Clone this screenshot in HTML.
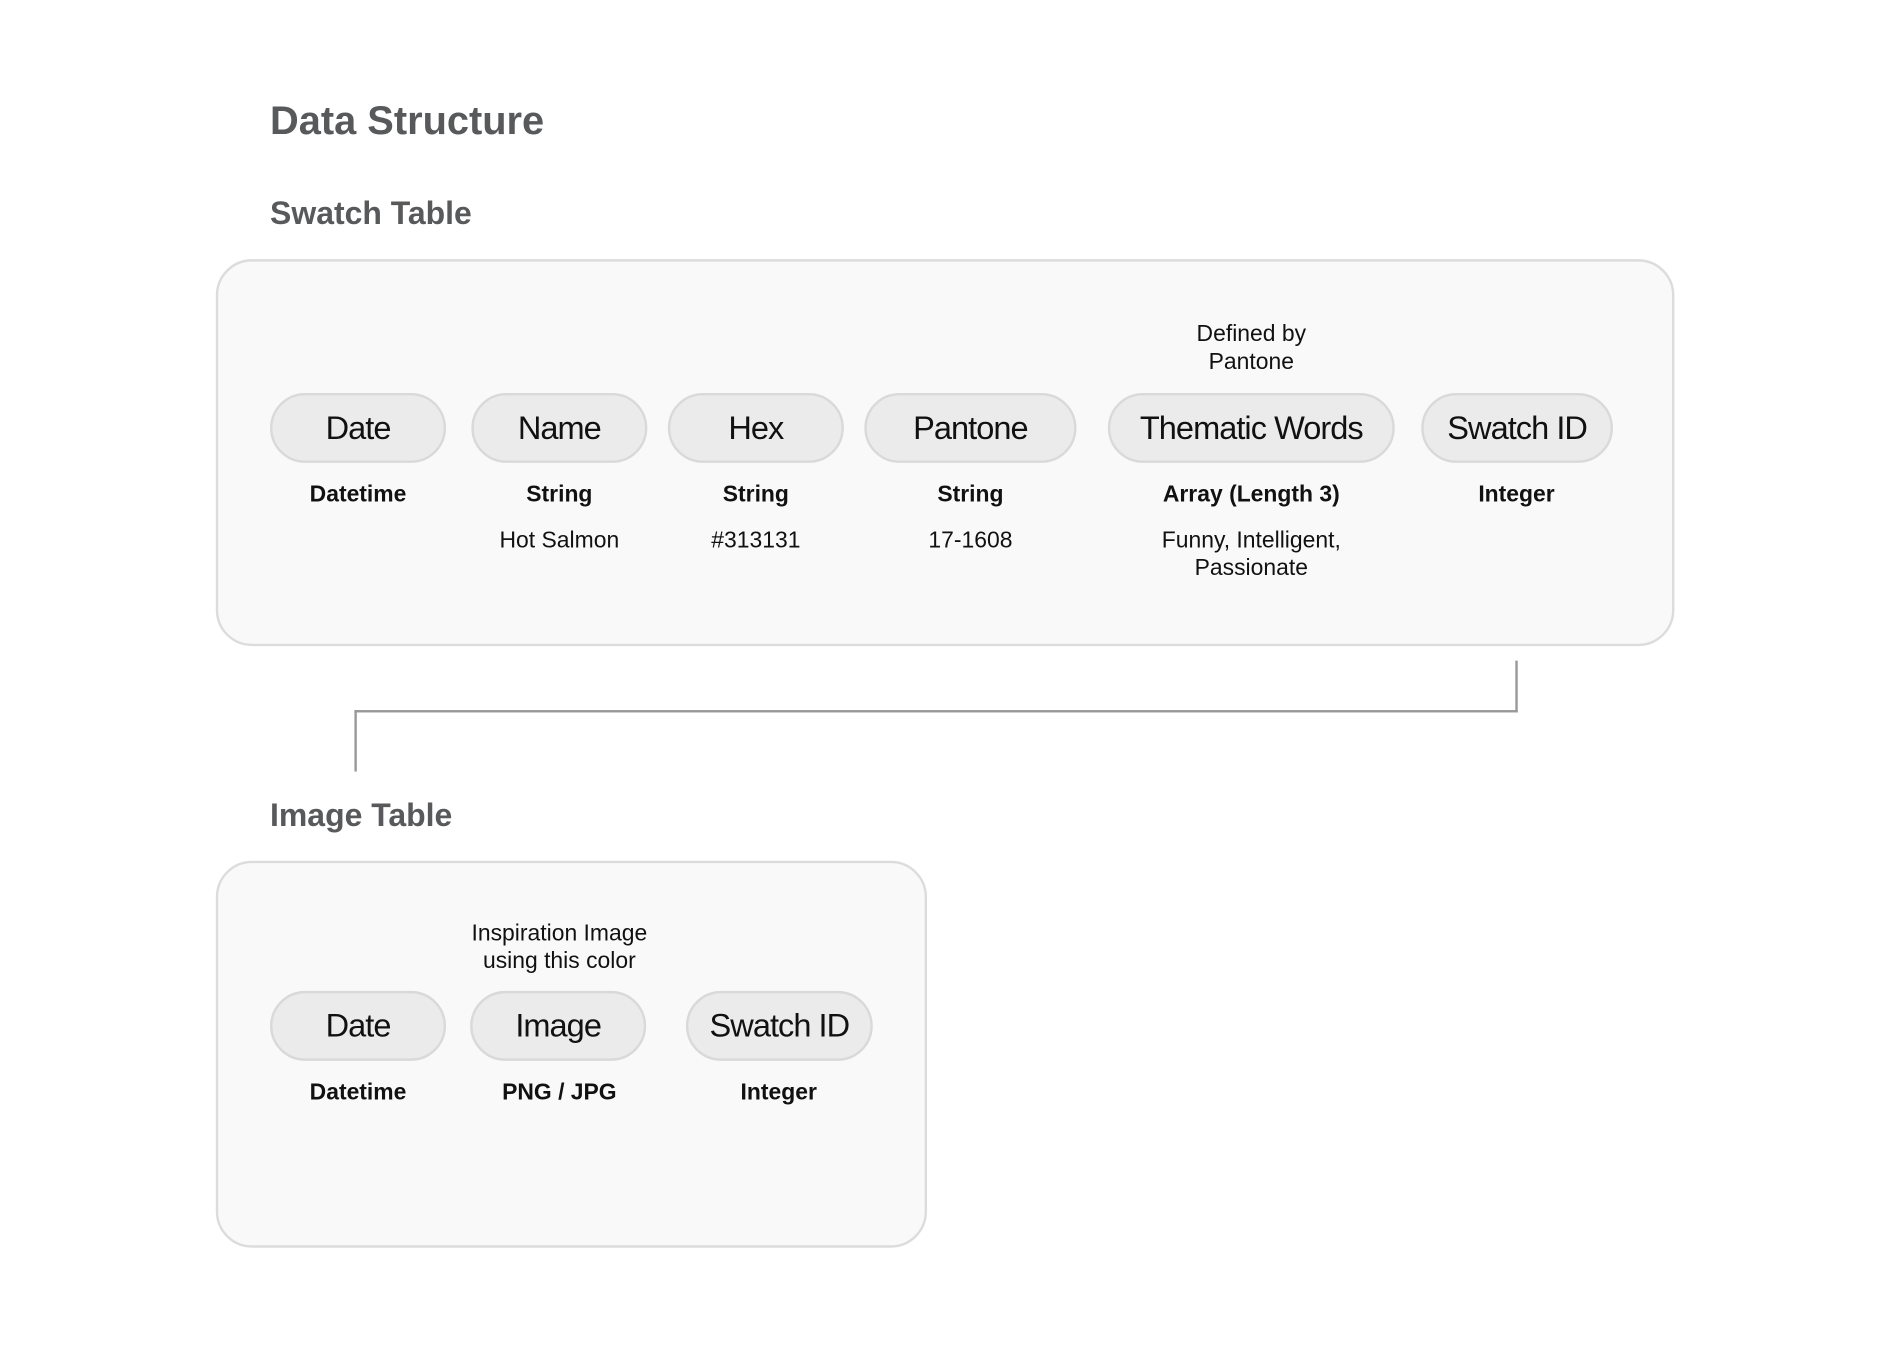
<!DOCTYPE html>
<html><head><meta charset="utf-8"><style>
html,body{margin:0;padding:0;background:#fff;}
body{width:1888px;height:1372px;overflow:hidden;position:relative;font-family:"Liberation Sans",sans-serif;}
#w{position:absolute;left:0;top:0;width:1560px;height:1134px;transform:scale(1.2055);transform-origin:0 0;}
.a{position:absolute;white-space:nowrap;}
h1,h2{margin:0;color:#58595b;font-weight:bold;position:absolute;white-space:nowrap;}
h1{font-size:33px;left:224px;top:81px;}
h2{font-size:26.5px;left:224px;}
.box{position:absolute;background:#f9f9f9;border:2px solid #dcdcdc;border-radius:30px;box-sizing:border-box;}
.pill{position:absolute;height:58px;background:#ebebeb;border:2px solid #d9d9d9;border-radius:29px;box-sizing:border-box;font-size:27px;color:#111;text-align:center;line-height:54px;letter-spacing:-0.8px;}
.t{position:absolute;font-size:19px;font-weight:bold;color:#111;text-align:center;width:300px;margin-left:-150px;}
.v{position:absolute;font-size:19px;color:#111;text-align:center;width:300px;margin-left:-150px;line-height:23px;}
.ln{position:absolute;background:#999;}
</style></head><body><div id="w">
<h1>Data Structure</h1>
<h2 style="top:162px">Swatch Table</h2>
<div class="box" style="left:179px;top:215px;width:1210px;height:321px"></div>
<div class="v" style="left:1038px;top:266px">Defined by<br>Pantone</div>
<div class="pill" style="left:224px;top:326px;width:146px">Date</div>
<div class="pill" style="left:391px;top:326px;width:146px">Name</div>
<div class="pill" style="left:554px;top:326px;width:146px">Hex</div>
<div class="pill" style="left:717px;top:326px;width:176px">Pantone</div>
<div class="pill" style="left:919px;top:326px;width:238px">Thematic Words</div>
<div class="pill" style="left:1179px;top:326px;width:159px">Swatch ID</div>
<div class="t" style="left:297px;top:400px">Datetime</div>
<div class="t" style="left:464px;top:400px">String</div>
<div class="t" style="left:627px;top:400px">String</div>
<div class="t" style="left:805px;top:400px">String</div>
<div class="t" style="left:1038px;top:400px">Array (Length 3)</div>
<div class="t" style="left:1258px;top:400px">Integer</div>
<div class="v" style="left:464px;top:437px">Hot Salmon</div>
<div class="v" style="left:627px;top:437px">#313131</div>
<div class="v" style="left:805px;top:437px">17-1608</div>
<div class="v" style="left:1038px;top:437px">Funny, Intelligent,<br>Passionate</div>
<div class="ln" style="left:1257px;top:548px;width:2px;height:43px"></div>
<div class="ln" style="left:294px;top:589px;width:965px;height:2px"></div>
<div class="ln" style="left:294px;top:589px;width:2px;height:51px"></div>
<h2 style="top:661px">Image Table</h2>
<div class="box" style="left:179px;top:714px;width:590px;height:321px"></div>
<div class="v" style="left:464px;top:763px">Inspiration Image<br>using this color</div>
<div class="pill" style="left:224px;top:822px;width:146px">Date</div>
<div class="pill" style="left:390px;top:822px;width:146px">Image</div>
<div class="pill" style="left:569px;top:822px;width:155px">Swatch ID</div>
<div class="t" style="left:297px;top:896px">Datetime</div>
<div class="t" style="left:464px;top:896px">PNG / JPG</div>
<div class="t" style="left:646px;top:896px">Integer</div>
</div></body></html>
